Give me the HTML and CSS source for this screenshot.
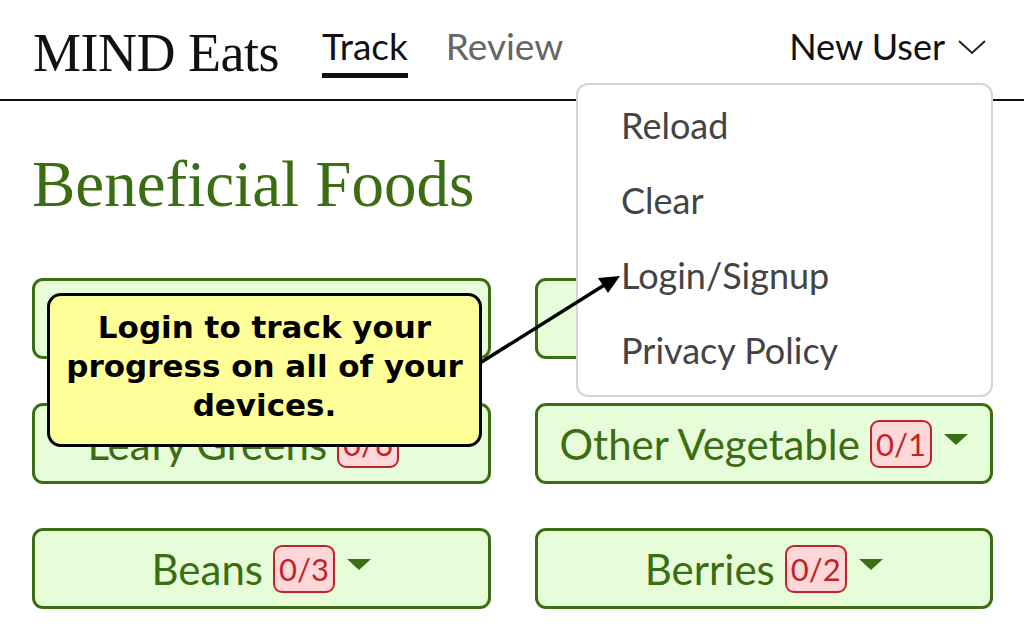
FILE: index.html
```html
<!DOCTYPE html>
<html>
<head>
<title>MIND Eats</title>
<meta charset="utf-8">
<link rel="stylesheet" href="styles.css">
</head>
<body>

<header class="topbar">
	<div class="brand">MIND Eats</div>
	<nav class="tabs">
		<a class="tab active">Track</a>
		<a class="tab">Review</a>
	</nav>
	<div class="user">
		<span>New User</span>
		<svg class="chev" width="30" height="16" viewBox="0 0 30 16">
			<path d="M2 2 L15 14 L28 2" fill="none" stroke="#222" stroke-width="2"/>
		</svg>
	</div>
</header>

<!-- user menu, open -->
<ul class="menu">
	<li>Reload</li>
	<li>Clear</li>
	<li>Login/Signup</li>
	<li>Privacy Policy</li>
</ul>

<main class="content">
	<h1 class="title">Beneficial Foods</h1>

	<div class="foods">
		<div class="food">Whole Grains <span class="badge">0/3</span><span class="caret"></span></div>
		<div class="food">Nuts <span class="badge">0/5</span><span class="caret"></span></div>
		<div class="food">Leafy Greens <span class="badge">0/6</span><span class="caret"></span></div>
		<div class="food">Other Vegetable <span class="badge">0/1</span><span class="caret"></span></div>
		<div class="food">Beans <span class="badge">0/3</span><span class="caret"></span></div>
		<div class="food">Berries <span class="badge">0/2</span><span class="caret"></span></div>
	</div>
</main>

<!-- onboarding hint -->
<div class="tip">Login to track your progress on all of your devices.</div>

<svg class="pointer" width="1024" height="634" viewBox="0 0 1024 634">
	<line x1="480" y1="363" x2="606" y2="284" stroke="#000" stroke-width="3.5"/>
	<polygon points="620,276 598,278 608,293" fill="#000"/>
</svg>

</body>
</html>
```

FILE: styles.css
```css
* {
	box-sizing: border-box;
}

html, body {
	margin: 0;
	padding: 0;
	background: #fff;
	overflow: hidden;
}

body {
	width: 1024px;
	height: 634px;
	position: relative;
	font-family: Lato, "Noto Sans", sans-serif;
}

/****** top bar ******/
.topbar {
	display: flex;
	align-items: flex-start;
	height: 101px;
	padding: 0 37px 0 33px;
	border-bottom: 2px solid #111;
}

.brand {
	font-family: "Liberation Serif", "DejaVu Serif", serif;
	font-size: 54px;
	line-height: 54px;
	margin-top: 26px;
	color: #111;
	letter-spacing: -0.5px;
}

.tabs {
	display: flex;
	gap: 38px;
	margin-left: 43px;
	margin-top: 24px;
}

.tab {
	font-size: 37px;
	line-height: 44px;
	color: #666;
	padding-bottom: 5px;
	border-bottom: 5px solid transparent;
}

.tab.active {
	color: #111;
	border-bottom-color: #111;
}

.user {
	margin-left: auto;
	margin-top: 24px;
	display: flex;
	align-items: center;
	gap: 12px;
	font-size: 36px;
	line-height: 44px;
	color: #111;
}

.chev {
	margin-top: 2px;
}

/****** dropdown menu ******/
.menu {
	position: absolute;
	top: 83px;
	left: 576px;
	width: 417px;
	height: 314px;
	margin: 0;
	padding: 3px 0 0 0;
	list-style: none;
	background: #fff;
	border: 2px solid #d4d4d4;
	border-radius: 12px;
}

.menu li {
	padding-left: 43px;
	font-size: 36px;
	line-height: 75px;
	color: #444;
}

/****** content ******/
.content {
	padding: 0 31px 0 32px;
}

.title {
	margin: 43px 0 0 0;
	font-family: "Liberation Serif", "DejaVu Serif", serif;
	font-weight: normal;
	font-size: 65px;
	line-height: 80px;
	color: #3b6d12;
}

.foods {
	display: grid;
	grid-template-columns: 1fr 1fr;
	gap: 44px;
	margin-top: 54px;
}

.food {
	height: 81px;
	display: flex;
	align-items: center;
	justify-content: center;
	background: #e7fdd9;
	border: 3px solid #3b6d12;
	border-radius: 11px;
	color: #3b6d12;
	font-size: 42px;
}

.badge {
	margin-left: 10px;
	padding: 0 4px;
	height: 48px;
	line-height: 44px;
	font-size: 31px;
	color: #c0232a;
	background: #fed8d8;
	border: 2px solid #c0232a;
	border-radius: 9px;
}

.caret {
	margin-left: 12px;
	width: 0;
	height: 0;
	border-left: 12px solid transparent;
	border-right: 12px solid transparent;
	border-top: 11px solid #3b6d12;
	margin-top: -8px;
}

/****** tooltip ******/
.tip {
	position: absolute;
	top: 293px;
	left: 47px;
	width: 435px;
	height: 154px;
	padding: 12px 4px 0;
	background: #ffff99;
	border: 3px solid #000;
	border-radius: 14px;
	font-family: "DejaVu Sans", sans-serif;
	font-weight: bold;
	font-size: 31px;
	line-height: 39px;
	text-align: center;
	color: #000;
}

.pointer {
	position: absolute;
	top: 0;
	left: 0;
}
```
